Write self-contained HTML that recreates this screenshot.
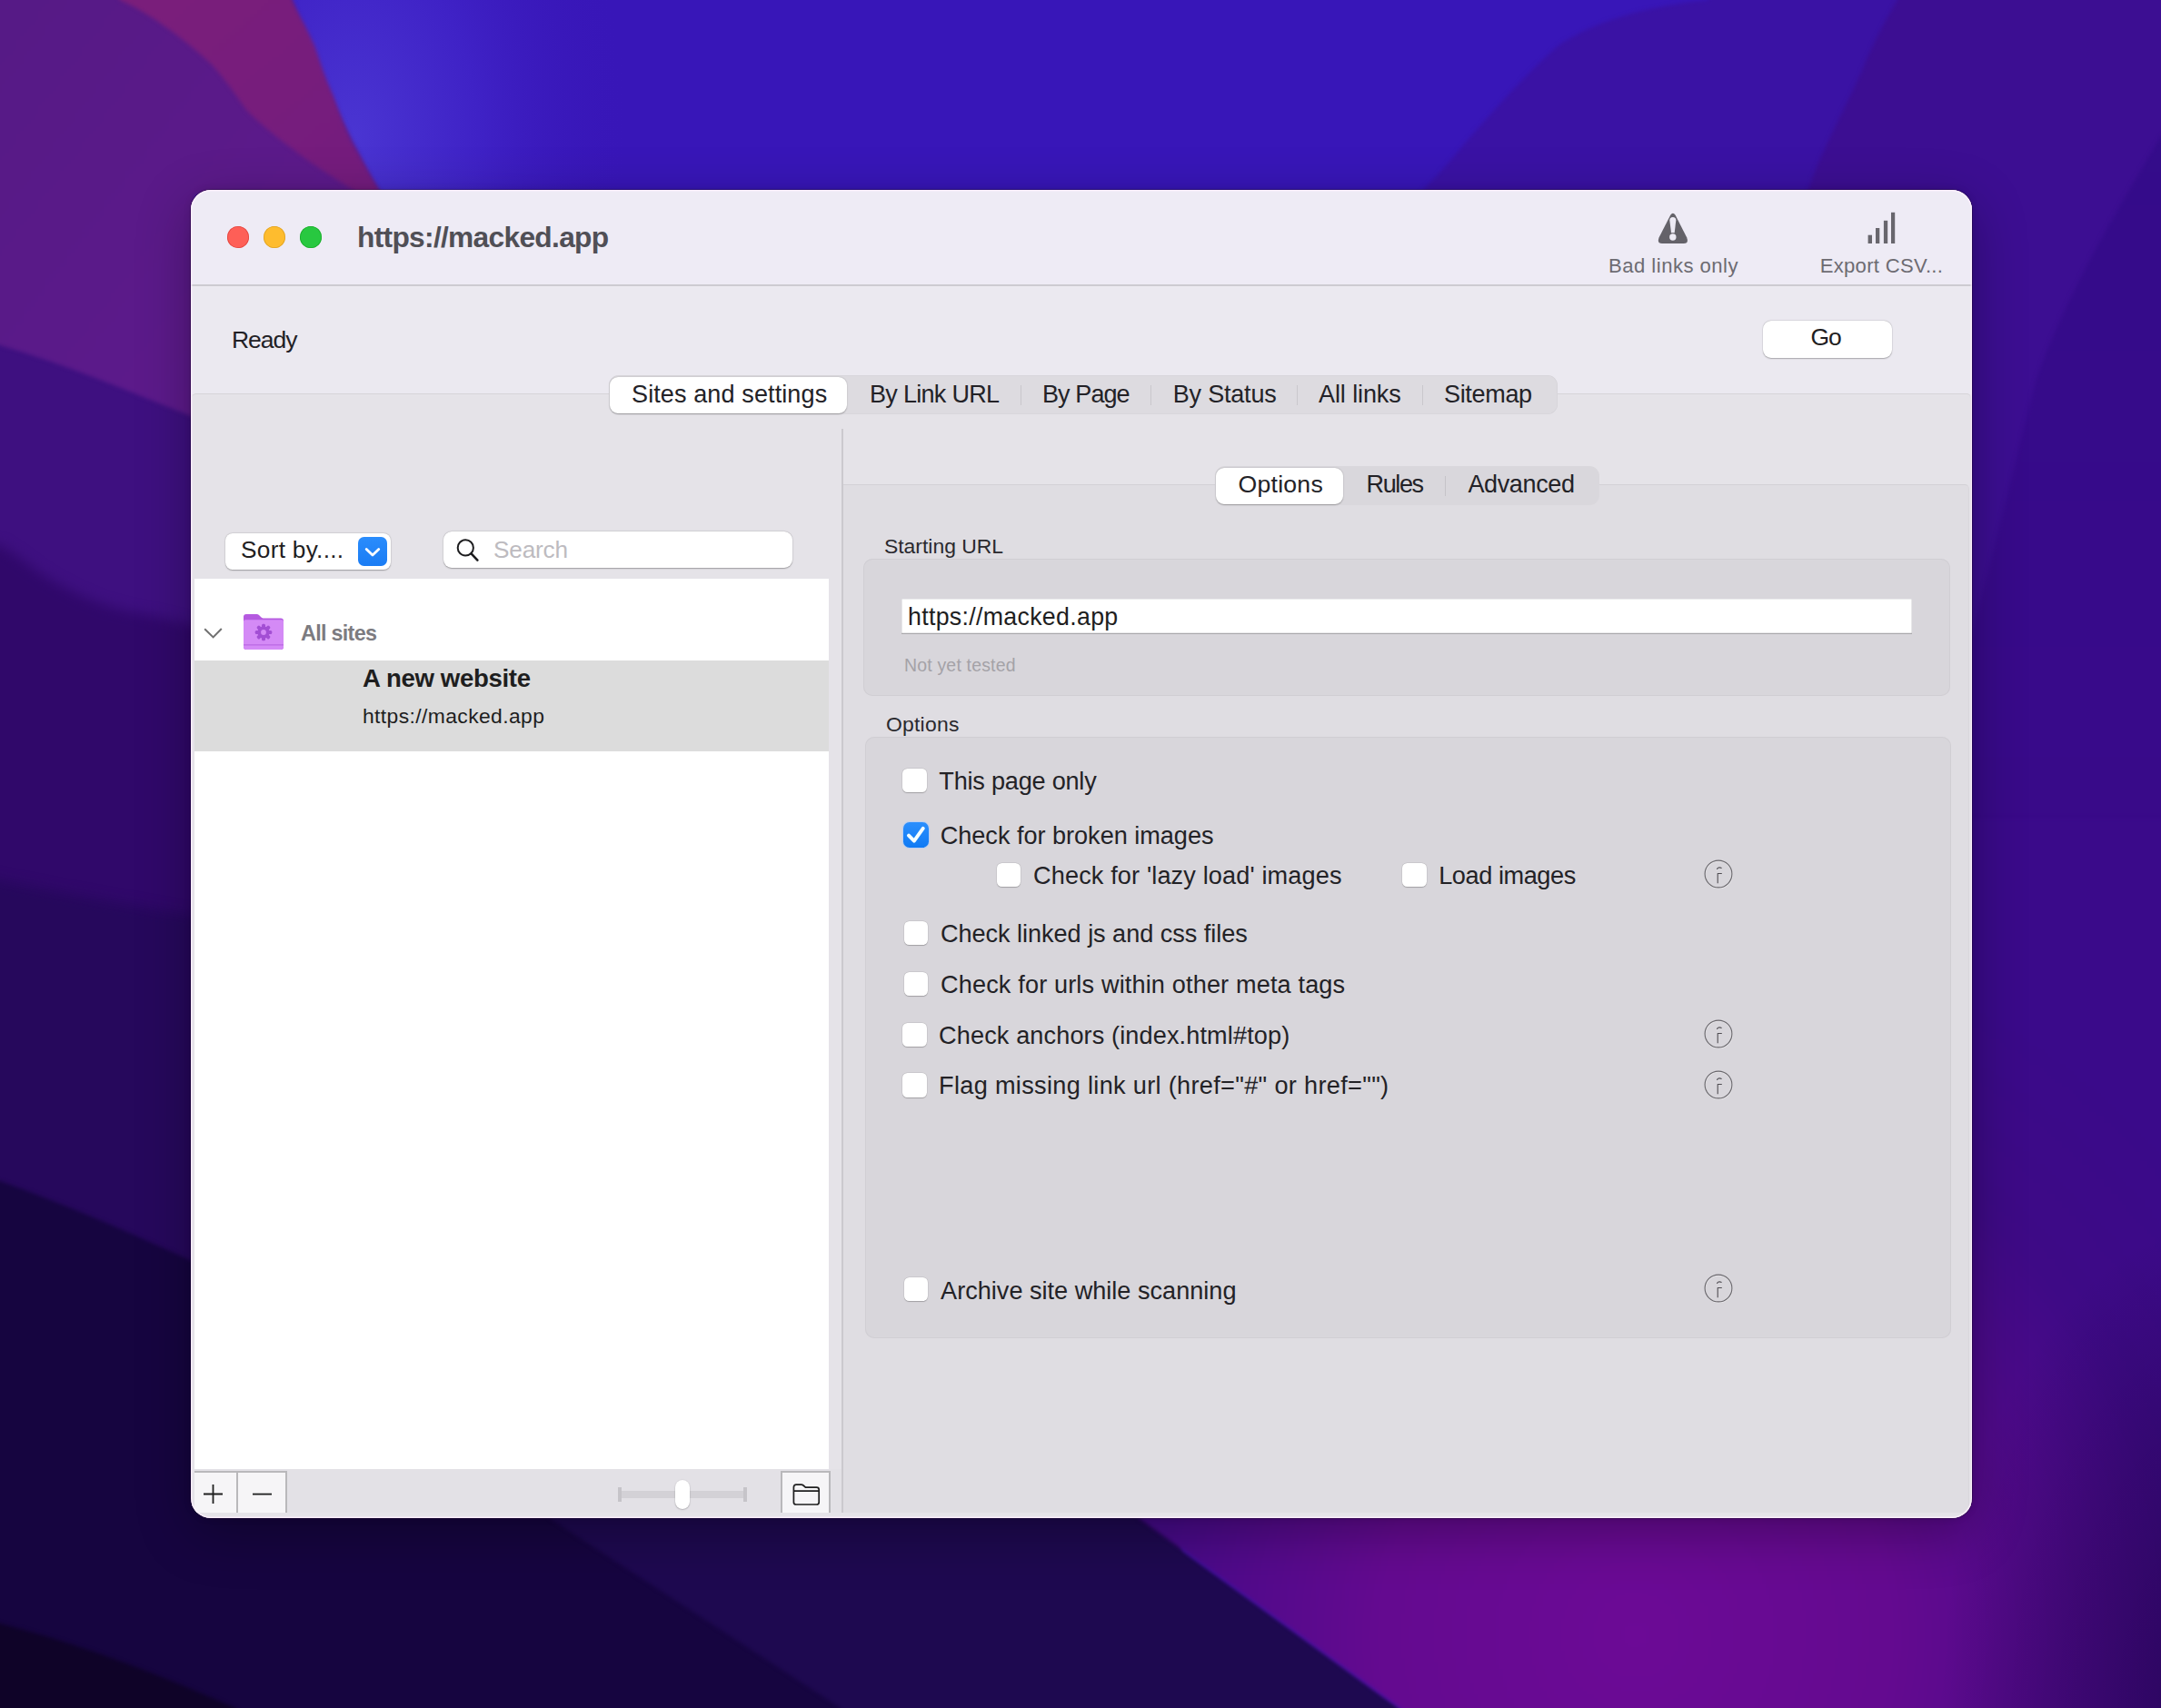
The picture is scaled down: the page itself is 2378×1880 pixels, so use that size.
<!DOCTYPE html>
<html><head><meta charset="utf-8"><style>
html,body{margin:0;padding:0;}
body{width:2378px;height:1880px;overflow:hidden;position:relative;background:#2a0b70;font-family:"Liberation Sans",sans-serif;}
#win{position:absolute;left:210px;top:209px;width:1960px;height:1462px;border-radius:22px;overflow:hidden;background:#e5e3e8;
box-shadow:0 0 0 1px rgba(20,0,40,0.35), 0 0 8px rgba(0,0,0,0.12), 0 16px 60px rgba(0,0,0,0.3);}
.t{position:absolute;white-space:pre;line-height:1;}
.b{position:absolute;}
#hl{position:absolute;left:210px;top:209px;width:1960px;height:1462px;border-radius:22px;box-shadow:inset 0 0 0 1.5px rgba(255,240,255,0.75);pointer-events:none;}
</style></head><body>
<svg style="position:absolute;left:0;top:0" width="2378" height="1880" viewBox="0 0 2378 1880">
<defs>
<radialGradient id="gGlow" cx="390" cy="150" r="380" gradientTransform="translate(390 150) scale(0.8 1.2) translate(-390 -150)" gradientUnits="userSpaceOnUse">
<stop offset="0" stop-color="#4a35d2"/><stop offset="0.45" stop-color="#3f22c6"/><stop offset="1" stop-color="#3816b8" stop-opacity="0"/>
</radialGradient>
<linearGradient id="gP1" x1="0" y1="0" x2="400" y2="300" gradientUnits="userSpaceOnUse"><stop offset="0" stop-color="#561a86"/><stop offset="1" stop-color="#5e1a8c"/></linearGradient>
<linearGradient id="gMagBand" x1="0" y1="0" x2="1" y2="1">
<stop offset="0" stop-color="#7c1f7a"/><stop offset="1" stop-color="#741c7e"/>
</linearGradient>
<radialGradient id="gMag" cx="1800" cy="1800" r="800" gradientUnits="userSpaceOnUse">
<stop offset="0" stop-color="#6c0a96"/><stop offset="0.35" stop-color="#640a90"/><stop offset="0.75" stop-color="#3e0a86"/><stop offset="1" stop-color="#3a0a8a"/>
</radialGradient>
<linearGradient id="gRight" x1="0" y1="0" x2="0" y2="1">
<stop offset="0" stop-color="#340c8a"/><stop offset="0.35" stop-color="#380a8a"/><stop offset="0.7" stop-color="#3c0a88"/><stop offset="1" stop-color="#3a0a80"/>
</linearGradient>
<filter id="bl" x="-5%" y="-5%" width="110%" height="110%" color-interpolation-filters="sRGB"><feGaussianBlur stdDeviation="2"/></filter>
<filter id="bl6" x="-10%" y="-10%" width="120%" height="120%" color-interpolation-filters="sRGB"><feGaussianBlur stdDeviation="7"/></filter>
</defs>
<rect x="-50" y="-50" width="2478" height="1980" fill="#3816b8"/>
<rect width="2378" height="1880" fill="url(#gGlow)"/>
<!-- top right regions -->
<path d="M1880 -60 L1880 0 C1800 8 1748 28 1715 50 C1680 80 1645 120 1610 160 C1590 185 1572 203 1560 215 L1560 1000 L2440 1000 L2440 -60 Z" fill="#3a12a4" filter="url(#bl)"/>
<path d="M2100 -60 L2088 0 C2070 30 2058 55 2048 80 C2025 130 2000 175 1988 215 L1988 1940 L2440 1940 L2440 -60 Z" fill="#3c0e92" filter="url(#bl)"/>
<path d="M2440 110 L2378 150 C2330 230 2270 330 2240 420 L2170 700 L2170 1940 L2440 1940 Z" fill="url(#gRight)" filter="url(#bl)"/>
<!-- left zones -->
<path d="M-60 250 L230 250 L230 1940 L-60 1940 Z" fill="#3e1080"/>
<path d="M-60 590 L0 600 C10 606 20 612 40 628 C70 648 110 668 149 674 C175 679 195 684 230 692 L230 1940 L-60 1940 Z" fill="#30086a" filter="url(#bl6)"/>
<path d="M-60 955 L0 969 C70 983 140 996 230 1010 L230 1940 L-60 1940 Z" fill="#26085c" filter="url(#bl6)"/>
<path d="M-60 1280 L0 1300 C70 1325 140 1355 215 1390 L1300 1390 L1300 1940 L-60 1940 Z" fill="#160540" filter="url(#bl)"/>
<!-- P1 purple top-left -->
<path d="M-60 -60 L310 -60 L321 0 C340 50 365 110 380 140 C395 170 405 190 420 215 L215 215 L215 460 C140 430 70 400 0 380 L-60 360 Z" fill="url(#gP1)" filter="url(#bl)"/>
<!-- magenta band -->
<path d="M100 -60 L310 -60 L321 0 C325 10 335 25 346 50 C350 60 355 80 366 104 C368 110 375 130 387 158 C395 170 405 190 420 215 L398 215 C375 200 350 185 330 170 C310 155 290 140 271 121 C262 108 250 90 233 71 C200 40 160 12 132 0 Z" fill="url(#gMagBand)" filter="url(#bl)"/>
<!-- bottom -->
<path d="M560 1600 L1200 1600 L1254 1672 L1540 1880 L1600 1940 L960 1940 L925 1880 L606 1672 Z" fill="#1e0950" filter="url(#bl)"/>
<path d="M1200 1600 L2165 1600 L2165 900 L2440 900 L2440 1940 L1600 1940 L1540 1880 L1254 1672 Z" fill="url(#gMag)" filter="url(#bl)"/>
<radialGradient id="gDarkR" cx="2460" cy="1880" r="360" gradientTransform="translate(2460 1880) scale(0.9 1.5) translate(-2460 -1880)" gradientUnits="userSpaceOnUse"><stop offset="0" stop-color="#160034" stop-opacity="0.55"/><stop offset="0.6" stop-color="#160034" stop-opacity="0.25"/><stop offset="1" stop-color="#160034" stop-opacity="0"/></radialGradient>
<rect x="1900" y="1000" width="540" height="940" fill="url(#gDarkR)"/>
<path d="M-60 1770 L0 1787 C90 1810 180 1845 259 1880 L300 1940 L-60 1940 Z" fill="#0f0328" filter="url(#bl)"/>
</svg>
<div id="win">
<div class="b" style="left:0.0px;top:0.0px;width:1960.0px;height:105.0px;background:#eeebf5"></div>
<div class="b" style="left:0.0px;top:104.0px;width:1960.0px;height:1.5px;background:#cdcbd1"></div>
<div class="b" style="left:0.0px;top:105.5px;width:1960.0px;height:119.0px;background:#ebe9f0"></div>
<div class="b" style="left:1.0px;top:224.0px;width:1957.6px;height:1240.0px;background:#e5e3e8;border-top:1px solid #d6d4d9;border-right:1px solid #dcdade;border-radius:5px 5px 0 0;box-sizing:border-box"></div>
<div class="b" style="left:718.0px;top:324.0px;width:1238.6px;height:1132.0px;background:#dfdde2;border-top:1px solid #d3d1d6;border-right:1px solid #d9d7dc;border-radius:0 5px 0 0;box-sizing:border-box"></div>
<div class="b" style="left:716.0px;top:263.0px;width:2.0px;height:1193.0px;background:#cbc9ce"></div>
<div class="b" style="left:40px;top:40px;width:24px;height:24px;border-radius:50%;background:#fe5f57;box-shadow:inset 0 0 0 0.8px #e0443e"></div>
<div class="b" style="left:80px;top:40px;width:24px;height:24px;border-radius:50%;background:#febc2e;box-shadow:inset 0 0 0 0.8px #dea123"></div>
<div class="b" style="left:120px;top:40px;width:24px;height:24px;border-radius:50%;background:#28c840;box-shadow:inset 0 0 0 0.8px #1aab29"></div>
<div class="t" style="left:183.0px;top:36.7px;font-size:31.72px;color:#504f56;font-weight:700;letter-spacing:-0.7px;">https://macked.app</div>
<svg class="b" style="left:1612px;top:23px" width="38" height="38" viewBox="0 0 38 38">
<path d="M16.2 4.8 Q18.9 0.6 21.6 4.8 L34.1 29.2 Q36.8 35.8 30.8 35.9 L7 35.9 Q1 35.8 3.7 29.2 Z" fill="#646269"/>
<path d="M15.3 10.6 Q15.3 7.0 18.8 7.0 Q22.3 7.0 22.3 10.6 L20.7 24.2 L17.0 24.2 Z" fill="#eeebf5"/>
<circle cx="18.8" cy="29.0" r="3.7" fill="#eeebf5"/>
</svg>
<svg class="b" style="left:1845px;top:24px" width="32" height="36" viewBox="0 0 32 36">
<rect x="0.6" y="25.7" width="4.4" height="9.3" fill="#68666d"/>
<rect x="9" y="18" width="4.3" height="17" fill="#68666d"/>
<rect x="17.9" y="9.8" width="4.3" height="25.2" fill="#68666d"/>
<rect x="26" y="0.8" width="4.2" height="34.2" fill="#68666d"/>
</svg>
<div class="t" style="left:1560.0px;top:73.1px;font-size:22.09px;color:#6d6b72;font-weight:400;letter-spacing:0.485px;">Bad links only</div>
<div class="t" style="left:1792.7px;top:73.1px;font-size:22.09px;color:#6d6b72;font-weight:400;letter-spacing:0.292px;">Export CSV...</div>
<div class="t" style="left:45.0px;top:152.1px;font-size:26.5px;color:#222126;font-weight:400;letter-spacing:-1.025px;">Ready</div>
<div class="b" style="left:1730.0px;top:143.5px;width:142.0px;height:41.0px;background:#fff;border-radius:9px;box-shadow:0 0.5px 1.5px rgba(0,0,0,0.28),0 0 0 0.5px rgba(0,0,0,0.06)"></div>
<div class="t" style="left:1782.5px;top:149.4px;font-size:26.5px;color:#1f1e22;font-weight:400;letter-spacing:-1.2px;">Go</div>
<div class="b" style="left:459.5px;top:204.3px;width:1044.5px;height:43.0px;background:#dddbe0;border-radius:11px;box-shadow:inset 0 0 0 0.6px rgba(0,0,0,0.04)"></div>
<div class="b" style="left:460.5px;top:206.0px;width:261.5px;height:39.5px;background:#fff;border-radius:9px;box-shadow:0 0.5px 1.5px rgba(0,0,0,0.3)"></div>
<div class="t" style="left:485.0px;top:211.9px;font-size:27.03px;color:#232227;font-weight:400;letter-spacing:0.112px;">Sites and settings</div>
<div class="t" style="left:747.0px;top:211.9px;font-size:27.03px;color:#232227;font-weight:400;letter-spacing:-0.71px;">By Link URL</div>
<div class="t" style="left:937.0px;top:211.9px;font-size:27.03px;color:#232227;font-weight:400;letter-spacing:-0.917px;">By Page</div>
<div class="t" style="left:1080.8px;top:211.9px;font-size:27.03px;color:#232227;font-weight:400;letter-spacing:-0.212px;">By Status</div>
<div class="t" style="left:1241.0px;top:211.9px;font-size:27.03px;color:#232227;font-weight:400;letter-spacing:-0.1px;">All links</div>
<div class="t" style="left:1379.0px;top:211.9px;font-size:27.03px;color:#232227;font-weight:400;letter-spacing:-0.333px;">Sitemap</div>
<div class="b" style="left:912.5px;top:215.0px;width:1.2px;height:22.0px;background:#c9c7cc"></div>
<div class="b" style="left:1056.2px;top:215.0px;width:1.2px;height:22.0px;background:#c9c7cc"></div>
<div class="b" style="left:1216.5px;top:215.0px;width:1.2px;height:22.0px;background:#c9c7cc"></div>
<div class="b" style="left:1354.5px;top:215.0px;width:1.2px;height:22.0px;background:#c9c7cc"></div>
<div class="b" style="left:37.6px;top:378.0px;width:182.0px;height:40.0px;background:#fff;border-radius:8px;box-shadow:0 0.5px 1.5px rgba(0,0,0,0.3),0 0 0 0.5px rgba(0,0,0,0.05)"></div>
<div class="t" style="left:55.0px;top:383.1px;font-size:26.22px;color:#1f1e22;font-weight:400;letter-spacing:0.28px;">Sort by....</div>
<div class="b" style="left:184.0px;top:382.0px;width:32.0px;height:32.0px;background:linear-gradient(#2a8cfc,#1a7cf4);border-radius:6.5px"></div>
<svg class="b" style="left:184px;top:382px" width="32" height="32" viewBox="0 0 32 32">
<path d="M9.2 13.4 L16 20 L22.8 13.6" fill="none" stroke="#fff" stroke-width="2.8" stroke-linecap="round" stroke-linejoin="round"/></svg>
<div class="b" style="left:277.8px;top:375.8px;width:384.5px;height:40.5px;background:#fff;border-radius:9px;box-shadow:0 0.5px 1.5px rgba(0,0,0,0.3),0 0 0 0.5px rgba(0,0,0,0.05)"></div>
<svg class="b" style="left:288px;top:380px" width="34" height="34" viewBox="0 0 34 34">
<circle cx="14.3" cy="13.9" r="8.6" fill="none" stroke="#1c1c1e" stroke-width="2"/>
<path d="M20.6 20.4 L27.4 27.6" stroke="#1c1c1e" stroke-width="2.6" stroke-linecap="round"/></svg>
<div class="t" style="left:333.0px;top:383.3px;font-size:26.22px;color:#bdbbc0;font-weight:400;letter-spacing:-0.2px;">Search</div>
<div class="b" style="left:4.0px;top:428.0px;width:698.0px;height:980.0px;background:#fff"></div>
<div class="b" style="left:4.0px;top:518.0px;width:698.0px;height:100.0px;background:#dcdcdc"></div>
<svg class="b" style="left:10px;top:477px" width="30" height="22" viewBox="0 0 30 22">
<path d="M5.2 6.2 L14.6 15.4 L23.8 6" fill="none" stroke="#707070" stroke-width="2"/></svg>
<svg class="b" style="left:56px;top:465px" width="48" height="44" viewBox="0 0 48 44">
<path d="M2 5 Q2 2 5 2 L16.5 2 Q18 2 19 3 L21 5 Q22 6 23.5 6.5 L43 6.5 Q46 6.5 46 9.5 L46 38 Q46 41 43 41 L5 41 Q2 41 2 38 Z" fill="#b55ae0"/>
<path d="M2 10 Q2 8.3 4 8.3 L44 8.3 Q46 8.3 46 10 L46 38 Q46 41 43 41 L5 41 Q2 41 2 38 Z" fill="#d48af6"/>
<rect x="2" y="35" width="44" height="1.6" fill="#c070e8"/>
<g transform="translate(24,22)" fill="#a34fd4">
<circle r="6.6"/>
<g id="tooth"><rect x="-2" y="-9.3" width="4" height="5" rx="1.5"/></g>
<use href="#tooth" transform="rotate(45)"/><use href="#tooth" transform="rotate(90)"/><use href="#tooth" transform="rotate(135)"/>
<use href="#tooth" transform="rotate(180)"/><use href="#tooth" transform="rotate(225)"/><use href="#tooth" transform="rotate(270)"/><use href="#tooth" transform="rotate(315)"/>
<circle r="2.9" fill="#d48af6"/>
</g></svg>
<div class="t" style="left:121.0px;top:476.8px;font-size:23.4px;color:#7c7b80;font-weight:700;letter-spacing:-0.713px;">All sites</div>
<div class="t" style="left:189.0px;top:524.2px;font-size:27.62px;color:#1e1e1e;font-weight:700;letter-spacing:-0.35px;">A new website</div>
<div class="t" style="left:189.0px;top:568.2px;font-size:22.9px;color:#1e1e1e;font-weight:400;letter-spacing:0.382px;">https://macked.app</div>
<div class="b" style="left:4.0px;top:1408.0px;width:712.0px;height:48.0px;background:#e3e1e6"></div>
<div class="b" style="left:4.0px;top:1410.0px;width:102.0px;height:46.0px;background:#f6f5f7;border-top:2px solid #b9b8bb;border-right:2px solid #b9b8bb;box-sizing:border-box"></div>
<div class="b" style="left:50.0px;top:1411.0px;width:2.0px;height:45.0px;background:#b9b8bb"></div>
<svg class="b" style="left:10px;top:1421px" width="90" height="30" viewBox="0 0 90 30">
<path d="M14.5 4 V25 M4 14.5 H25" stroke="#1f1f1f" stroke-width="1.8"/>
<path d="M58 14.6 H79" stroke="#1f1f1f" stroke-width="1.8"/></svg>
<div class="b" style="left:471.0px;top:1432.0px;width:140.0px;height:7.5px;background:#d3d1d6;border-radius:2px"></div>
<div class="b" style="left:470.0px;top:1428.0px;width:4.0px;height:16.0px;background:#c6c4c9"></div>
<div class="b" style="left:608.0px;top:1428.0px;width:4.0px;height:16.0px;background:#c6c4c9"></div>
<div class="b" style="left:532.6px;top:1419.6px;width:16.7px;height:32.5px;background:#fff;border-radius:9px;box-shadow:0 0.5px 1.5px rgba(0,0,0,0.35)"></div>
<div class="b" style="left:648.5px;top:1410.0px;width:55.5px;height:46.0px;background:#f6f5f7;border-top:2px solid #b9b8bb;border-left:2px solid #b9b8bb;border-right:2px solid #b9b8bb;box-sizing:border-box"></div>
<svg class="b" style="left:660px;top:1422px" width="34" height="28" viewBox="0 0 34 28">
<path d="M3.4 6 Q3.4 3.2 6.2 3.2 L11.8 3.2 Q13 3.2 14 4 L16.4 6.2 L28.6 6.2 Q31.2 6.2 31.2 8.8 L31.2 22.4 Q31.2 25 28.6 25 L6 25 Q3.4 25 3.4 22.4 Z M3.4 10.2 H31.2" fill="none" stroke="#1f1f1f" stroke-width="1.7" stroke-linejoin="round"/></svg>
<div class="b" style="left:1127.0px;top:304.2px;width:422.6px;height:43.2px;background:#d9d7dc;border-radius:11px"></div>
<div class="b" style="left:1128.0px;top:306.0px;width:140.0px;height:40.0px;background:#fff;border-radius:9px;box-shadow:0 0.5px 1.5px rgba(0,0,0,0.3)"></div>
<div class="t" style="left:1152.6px;top:311.0px;font-size:26.65px;color:#232227;font-weight:400;letter-spacing:0.217px;">Options</div>
<div class="t" style="left:1293.5px;top:310.7px;font-size:27.03px;color:#232227;font-weight:400;letter-spacing:-1.375px;">Rules</div>
<div class="t" style="left:1405.4px;top:310.7px;font-size:27.03px;color:#232227;font-weight:400;letter-spacing:-0.357px;">Advanced</div>
<div class="b" style="left:1380.3px;top:315.0px;width:1.2px;height:22.0px;background:#c5c3c8"></div>
<div class="t" style="left:763.0px;top:381.0px;font-size:22.92px;color:#2a292e;font-weight:400;letter-spacing:-0.009px;">Starting URL</div>
<div class="b" style="left:740.0px;top:406.2px;width:1196.0px;height:151.2px;background:#d8d6db;border-radius:10px;box-shadow:inset 0 0 0 1px #d0ced3"></div>
<div class="b" style="left:781.7px;top:449.5px;width:1112.5px;height:39.2px;background:#fff;box-shadow:inset 0 -1.2px 0 #a9a8ab, inset 0 0 0 0.6px #d8d8da"></div>
<div class="t" style="left:789.0px;top:456.9px;font-size:26.76px;color:#1e1e1e;font-weight:400;letter-spacing:0.306px;">https://macked.app</div>
<div class="t" style="left:785.0px;top:513.7px;font-size:19.48px;color:#a4a2a7;font-weight:400;letter-spacing:0.185px;">Not yet tested</div>
<div class="t" style="left:765.0px;top:576.6px;font-size:22.92px;color:#2a292e;font-weight:400;letter-spacing:0.233px;">Options</div>
<div class="b" style="left:742.3px;top:601.8px;width:1195.0px;height:662.0px;background:#d8d6db;border-radius:10px;box-shadow:inset 0 0 0 1px #d0ced3"></div>
<div class="b" style="left:783.0px;top:636.8px;width:26.5px;height:26.5px;background:#fff;border-radius:5.5px;box-shadow:0 0.5px 1px rgba(0,0,0,0.22),0 0 0 0.5px rgba(0,0,0,0.08)"></div>
<div class="t" style="left:823.3px;top:637.1px;font-size:27.11px;color:#232226;font-weight:400;letter-spacing:-0.223px;">This page only</div>
<svg class="b" style="left:782px;top:693.8px" width="32" height="32" viewBox="-2 -2 32 32">
<defs><linearGradient id="gcb" x1="0" y1="0" x2="0" y2="1"><stop offset="0" stop-color="#2b8ffd"/><stop offset="1" stop-color="#0f7af4"/></linearGradient></defs>
<rect x="-0.6" y="-0.6" width="29.2" height="29.2" rx="7.4" fill="none" stroke="#a9ccff" stroke-opacity="0.7" stroke-width="1"/>
<rect x="0" y="0" width="28" height="28" rx="6.8" fill="url(#gcb)"/>
<path d="M6 14.6 L11.9 20.6 L21.7 6.9" fill="none" stroke="#f4ffff" stroke-width="3.9" stroke-linecap="round" stroke-linejoin="round"/></svg>
<div class="t" style="left:824.7px;top:697.1px;font-size:27.11px;color:#232226;font-weight:400;letter-spacing:-0.023px;">Check for broken images</div>
<div class="b" style="left:886.6px;top:740.6px;width:26.5px;height:26.5px;background:#fff;border-radius:5.5px;box-shadow:0 0.5px 1px rgba(0,0,0,0.22),0 0 0 0.5px rgba(0,0,0,0.08)"></div>
<div class="t" style="left:927.0px;top:740.8px;font-size:27.11px;color:#232226;font-weight:400;letter-spacing:0.137px;">Check for 'lazy load' images</div>
<div class="b" style="left:1333.0px;top:740.7px;width:26.5px;height:26.5px;background:#fff;border-radius:5.5px;box-shadow:0 0.5px 1px rgba(0,0,0,0.22),0 0 0 0.5px rgba(0,0,0,0.08)"></div>
<div class="t" style="left:1373.2px;top:740.8px;font-size:27.11px;color:#232226;font-weight:400;letter-spacing:-0.42px;">Load images</div>
<div class="b" style="left:784.8px;top:804.5px;width:26.5px;height:26.5px;background:#fff;border-radius:5.5px;box-shadow:0 0.5px 1px rgba(0,0,0,0.22),0 0 0 0.5px rgba(0,0,0,0.08)"></div>
<div class="t" style="left:825.0px;top:805.1px;font-size:27.11px;color:#232226;font-weight:400;letter-spacing:-0.046px;">Check linked js and css files</div>
<div class="b" style="left:784.8px;top:860.8px;width:26.5px;height:26.5px;background:#fff;border-radius:5.5px;box-shadow:0 0.5px 1px rgba(0,0,0,0.22),0 0 0 0.5px rgba(0,0,0,0.08)"></div>
<div class="t" style="left:825.0px;top:860.6px;font-size:27.11px;color:#232226;font-weight:400;letter-spacing:0.144px;">Check for urls within other meta tags</div>
<div class="b" style="left:783.0px;top:916.7px;width:26.5px;height:26.5px;background:#fff;border-radius:5.5px;box-shadow:0 0.5px 1px rgba(0,0,0,0.22),0 0 0 0.5px rgba(0,0,0,0.08)"></div>
<div class="t" style="left:823.1px;top:916.6px;font-size:27.11px;color:#232226;font-weight:400;letter-spacing:0.117px;">Check anchors (index.html#top)</div>
<div class="b" style="left:783.0px;top:972.4px;width:26.5px;height:26.5px;background:#fff;border-radius:5.5px;box-shadow:0 0.5px 1px rgba(0,0,0,0.22),0 0 0 0.5px rgba(0,0,0,0.08)"></div>
<div class="t" style="left:823.0px;top:972.3px;font-size:27.11px;color:#232226;font-weight:400;letter-spacing:0.326px;">Flag missing link url (href=&quot;#&quot; or href=&quot;&quot;)</div>
<div class="b" style="left:784.7px;top:1196.5px;width:26.5px;height:26.5px;background:#fff;border-radius:5.5px;box-shadow:0 0.5px 1px rgba(0,0,0,0.22),0 0 0 0.5px rgba(0,0,0,0.08)"></div>
<div class="t" style="left:825.1px;top:1197.5px;font-size:27.11px;color:#232226;font-weight:400;letter-spacing:-0.004px;">Archive site while scanning</div>
<svg class="b" style="left:1664px;top:736px" width="34" height="36" viewBox="0 0 34 36">
<circle cx="17.3" cy="17.9" r="14.9" fill="none" stroke="#ffffff" stroke-opacity="0.5" stroke-width="1.1"/>
<circle cx="17" cy="17" r="14.9" fill="none" stroke="#69676c" stroke-width="1.15"/>
<path d="M16.2 16.4 V27.2 M15.8 16.5 H20.8" fill="none" stroke="#4f4d52" stroke-width="1.1"/>
<path d="M15.5 12 Q16.2 8.9 20.6 10.4" fill="none" stroke="#4f4d52" stroke-width="1.1"/></svg>
<svg class="b" style="left:1664px;top:912px" width="34" height="36" viewBox="0 0 34 36">
<circle cx="17.3" cy="17.9" r="14.9" fill="none" stroke="#ffffff" stroke-opacity="0.5" stroke-width="1.1"/>
<circle cx="17" cy="17" r="14.9" fill="none" stroke="#69676c" stroke-width="1.15"/>
<path d="M16.2 16.4 V27.2 M15.8 16.5 H20.8" fill="none" stroke="#4f4d52" stroke-width="1.1"/>
<path d="M15.5 12 Q16.2 8.9 20.6 10.4" fill="none" stroke="#4f4d52" stroke-width="1.1"/></svg>
<svg class="b" style="left:1664px;top:968px" width="34" height="36" viewBox="0 0 34 36">
<circle cx="17.3" cy="17.9" r="14.9" fill="none" stroke="#ffffff" stroke-opacity="0.5" stroke-width="1.1"/>
<circle cx="17" cy="17" r="14.9" fill="none" stroke="#69676c" stroke-width="1.15"/>
<path d="M16.2 16.4 V27.2 M15.8 16.5 H20.8" fill="none" stroke="#4f4d52" stroke-width="1.1"/>
<path d="M15.5 12 Q16.2 8.9 20.6 10.4" fill="none" stroke="#4f4d52" stroke-width="1.1"/></svg>
<svg class="b" style="left:1664px;top:1192px" width="34" height="36" viewBox="0 0 34 36">
<circle cx="17.3" cy="17.9" r="14.9" fill="none" stroke="#ffffff" stroke-opacity="0.5" stroke-width="1.1"/>
<circle cx="17" cy="17" r="14.9" fill="none" stroke="#69676c" stroke-width="1.15"/>
<path d="M16.2 16.4 V27.2 M15.8 16.5 H20.8" fill="none" stroke="#4f4d52" stroke-width="1.1"/>
<path d="M15.5 12 Q16.2 8.9 20.6 10.4" fill="none" stroke="#4f4d52" stroke-width="1.1"/></svg>
</div>
<div id="hl"></div>
</body></html>
